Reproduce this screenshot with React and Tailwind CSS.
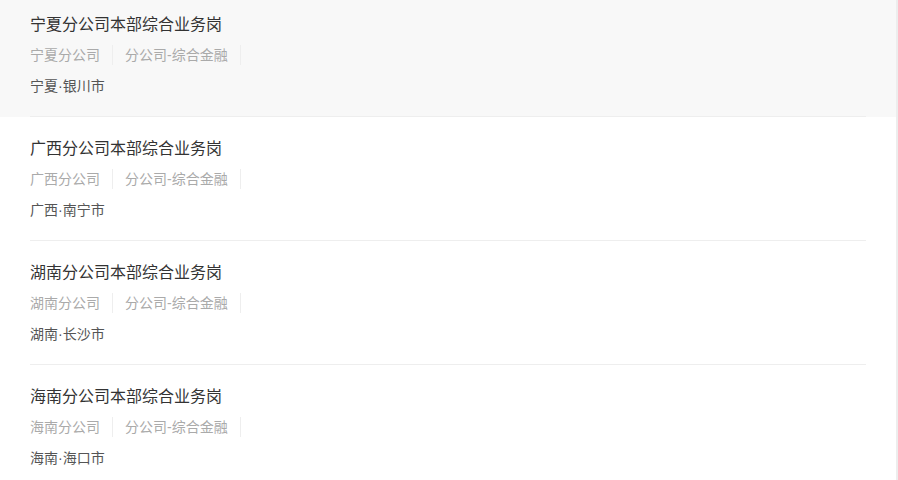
const jobs = [
  { title: "宁夏分公司本部综合业务岗", org: "宁夏分公司", dept: "分公司-综合金融", city: "宁夏·银川市", active: true },
  { title: "广西分公司本部综合业务岗", org: "广西分公司", dept: "分公司-综合金融", city: "广西·南宁市" },
  { title: "湖南分公司本部综合业务岗", org: "湖南分公司", dept: "分公司-综合金融", city: "湖南·长沙市" },
  { title: "海南分公司本部综合业务岗", org: "海南分公司", dept: "分公司-综合金融", city: "海南·海口市" },
];

function JobItem({ job }) {
  return (
    <li className={`px-[30px] cursor-pointer ${job.active ? "bg-[#f8f8f8]" : "bg-white"}`}>
      <div className="h-[124px] pt-[21px] border-b border-[#eeeeee]">
        <h3 className="text-[16px] leading-[22px] text-[#333333]">{job.title}</h3>
        <div className="flex items-center mt-[9px] h-[20px] text-[14px] text-[#aaaaaa]">
          <span className="pr-[12px] border-r border-[#eeeeee] leading-[20px]">{job.org}</span>
          <span className="px-[12px] border-r border-[#eeeeee] leading-[20px]">{job.dept}</span>
        </div>
        <p className="mt-[11px] text-[14px] leading-[20px] text-[#555555]">{job.city}</p>
      </div>
    </li>
  );
}

export default function App() {
  return (
    <div
      className="h-[480px] w-[898px] overflow-hidden bg-white"
      style={{ fontFamily: '"Liberation Sans", "Noto Sans CJK SC", sans-serif' }}
    >
      <div className="h-full w-[898px] border-r-2 border-[#ededed] overflow-hidden">
        {/* list scrolled down a few pixels */}
        <ul className="-mt-[7px]">
          {jobs.map((job) => (
            <JobItem key={job.title} job={job} />
          ))}
        </ul>
      </div>
    </div>
  );
}
